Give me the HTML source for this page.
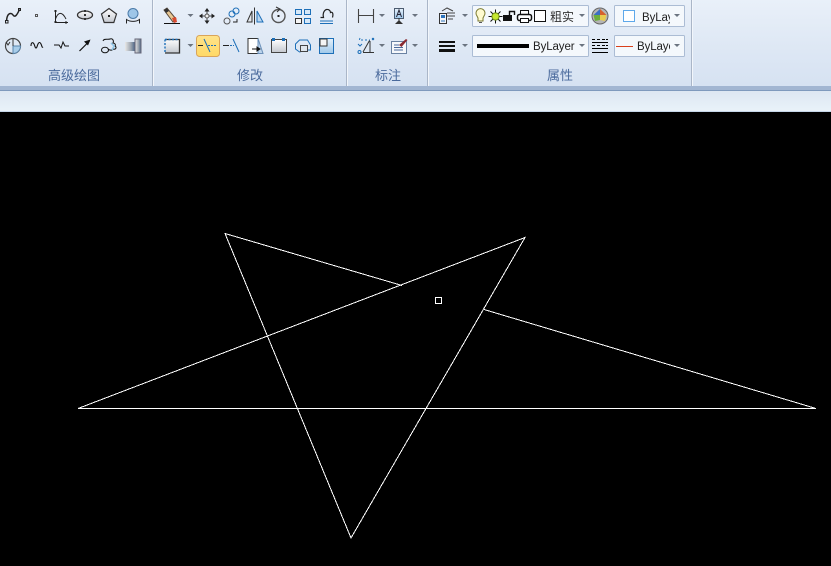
<!DOCTYPE html>
<html lang="zh"><head><meta charset="utf-8"><title>CAD</title>
<style>
html,body{margin:0;padding:0;background:#000}
body{width:831px;height:566px;overflow:hidden;position:relative}
svg{position:absolute;left:0;top:0;display:block}
text{font-family:"Liberation Sans","Noto Sans CJK SC",sans-serif}
</style></head><body>
<svg width="831" height="566" viewBox="0 0 831 566" xmlns="http://www.w3.org/2000/svg">
<defs>
<linearGradient id="rb" x1="0" y1="0" x2="0" y2="1"><stop offset="0" stop-color="#e9f0f9"/><stop offset=".6" stop-color="#dde7f4"/><stop offset="1" stop-color="#d6e2f2"/></linearGradient>
<linearGradient id="bar" x1="0" y1="0" x2="0" y2="1"><stop offset="0" stop-color="#dde7f2"/><stop offset="1" stop-color="#e9f2f9"/></linearGradient>
<linearGradient id="gray" x1="0" y1="0" x2="0" y2="1"><stop offset="0" stop-color="#fff"/><stop offset="1" stop-color="#c4c8cf"/></linearGradient>
<linearGradient id="blue" x1="0" y1="0" x2="0" y2="1"><stop offset="0" stop-color="#e6f1fb"/><stop offset="1" stop-color="#9fc8ea"/></linearGradient>
<linearGradient id="yl" x1="0" y1="0" x2="0" y2="1"><stop offset="0" stop-color="#ffe38a"/><stop offset="1" stop-color="#ffd966"/></linearGradient>
<linearGradient id="cyl" x1="0" y1="0" x2="1" y2="0"><stop offset="0" stop-color="#e8e8e8"/><stop offset=".6" stop-color="#9aa3ad"/><stop offset="1" stop-color="#4a6488"/></linearGradient>
<path id="a" d="M0 0h6l-3 3z" fill="#6b7480"/>
</defs>

<!-- ribbon -->
<rect x="0" y="0" width="831" height="86" fill="url(#rb)"/>
<rect x="0" y="86" width="831" height="4" fill="#a2b6d2"/>
<rect x="0" y="90" width="831" height="1" fill="#7f9abd"/>
<rect x="0" y="91" width="831" height="20" fill="url(#bar)"/>
<rect x="0" y="111" width="831" height="1" fill="#c6d6e8"/>
<rect x="0" y="112" width="831" height="454" fill="#000"/>
<g fill="#aab6c8">
<rect x="152" y="0" width="1" height="86"/><rect x="346" y="0" width="1" height="86"/><rect x="427" y="0" width="1" height="86"/><rect x="691" y="0" width="1" height="86"/>
</g>
<rect x="153" y="0" width="1" height="86" fill="#f2f6fb"/><rect x="347" y="0" width="1" height="86" fill="#f2f6fb"/><rect x="428" y="0" width="1" height="86" fill="#f2f6fb"/><rect x="692" y="0" width="1" height="86" fill="#f2f6fb"/>

<!-- group labels -->
<g font-size="13" fill="#4a6a9c" text-anchor="middle">
<text x="74" y="80">高级绘图</text><text x="250" y="80">修改</text><text x="388" y="80">标注</text><text x="560" y="80">属性</text>
</g>

<!-- row 1 left -->
<g fill="none" stroke="#222" stroke-width="1">
<path d="M6.500 21C7 13 11 12 13 15S17 15 19.500 9.500" stroke-width="1.500" stroke="#222"/><rect x="5.500" y="20.500" width="2.500" height="2.500" stroke-width="1"/><rect x="18.500" y="8.500" width="2" height="2"/>
<rect x="35.500" y="14.500" width="2" height="2" stroke="#555"/>
<path d="M55.500 10V22.500H68M55.500 19C58 12 62 11 66 19" stroke="#222"/><path d="M54 11h3M54 22h3M66 21v3" stroke="#222"/>
<ellipse cx="85" cy="15" rx="7.500" ry="4" stroke="#333" stroke-width="1.300" fill="url(#gray)"/><rect x="84" y="10" width="2" height="2" fill="#333" stroke="none"/><rect x="84" y="18" width="2" height="2" fill="#333" stroke="none"/><rect x="84" y="14" width="2" height="2" fill="#333" stroke="none"/>
<path d="M109 8.500L116.500 14 113.800 22.500H104.200L101.500 14Z" stroke="#333" stroke-width="1.200" fill="url(#gray)"/><rect x="108" y="15" width="2" height="2" fill="#222" stroke="none"/>
<circle cx="133" cy="13.500" r="5" fill="#9ec6e8" stroke="#4a7aa8"/><path d="M126.500 23.500V19.500C130 22 136 22 139.500 19.500V23.500" stroke="#222"/>
</g>
<!-- row 2 left -->
<g fill="none" stroke="#333" stroke-width="1">
<circle cx="13" cy="46" r="7.500" stroke="#444" stroke-width="1.200"/><path d="M13 46h7.500a7.500 7.500 0 0 1-7.500 7.500Z" fill="#a8cdea" stroke="#5a86ad"/><path d="M6 42l2 3 2-3M13 38.500v7.500" stroke="#333"/>
<path d="M31 46c0-4 2-4 3-2s1 4 2 4 1-2 2-4 2-2 3 0 1 4 2 3" stroke="#111" stroke-width="1.100"/>
<path d="M54 45h5l2 3 2-6 2 4h4" stroke="#111"/>
<path d="M79.500 51L89.500 41" stroke="#111" stroke-width="1.200"/><path d="M84 41.500l4 4 2.500-6z" fill="#111" stroke="none"/>
<path d="M103 41c1-3 5-1 7-2 3-1 4 2 3 4 2 0 3 2 2 3 2 1 1 4-2 3-1 2-4 1-5 0" stroke="#111"/><ellipse cx="105" cy="50" rx="3.500" ry="2.800" stroke="#111"/><path d="M111 43l3 3-2 4" stroke="#8ec6e8" stroke-width="1.500"/>
<rect x="125" y="42" width="10" height="9" fill="url(#cyl)" stroke="none"/><rect x="135" y="39" width="6" height="14" fill="url(#cyl)" stroke="#667"/>
</g>

<!-- modify row 1 -->
<g fill="none" stroke="#222">
<path d="M164 10l3-2 9 11-3 3z" fill="#e8c894" stroke="#5a4a3a"/><path d="M172 18l4-1 1 5-3 1z" fill="#d94a30" stroke="none"/><path d="M164 10l3-2 2 3-3 2z" fill="#333" stroke="none"/><path d="M164 23.500h16" stroke="#111"/>
<path d="M207 11v10M202 16h10" stroke="#444"/><path d="M207 8l-2.500 3.500h5zM207 24l-2.500-3.500h5zM199 16l3.500-2.500v5zM215 16l-3.500-2.500v5z" fill="#222" stroke="none"/><circle cx="207" cy="16" r="2" fill="#eee" stroke="#555"/>
<circle cx="227" cy="21" r="3" stroke="#555"/><circle cx="232" cy="14" r="3" stroke="#1d6fb8"/><circle cx="236" cy="11" r="3" stroke="#1d6fb8"/><path d="M233 22h4v-3" stroke="#222"/>
<path d="M254.500 7.500v17" stroke="#333"/><path d="M252 11v11h-5z" fill="#e5e9ee" stroke="#333"/><path d="M257 11v11h6z" fill="#bcd7f0" stroke="#1d6fb8"/>
<circle cx="278.500" cy="16" r="6.500" stroke="#555" stroke-width="1.400"/><rect x="277.500" y="15" width="2" height="2" fill="#222" stroke="none"/><path d="M276 7l4 2-3 3" stroke="#333"/>
<rect x="295.500" y="9.500" width="6" height="5" stroke="#1d6fb8" fill="#d6e8f8"/><rect x="304.500" y="9.500" width="6" height="5" stroke="#1d6fb8" fill="#d6e8f8"/><rect x="295.500" y="18.500" width="6" height="5" stroke="#333" fill="#f5f5f5"/><rect x="304.500" y="18.500" width="6" height="5" stroke="#1d6fb8" fill="#d6e8f8"/>
<path d="M320.500 17.500h3c-1-3 0-7 3-8 3-.5 4 2 4 3 2-1 3 1 2 5" stroke="#222" stroke-width="1.200"/><path d="M320 21h13M320 23.500h13" stroke="#1d6fb8"/>
</g>
<use href="#a" x="187.500" y="14"/>

<!-- modify row 2 -->
<rect x="196.500" y="35.500" width="23" height="21" rx="3" fill="url(#yl)" stroke="#d9a45a"/>
<g fill="none" stroke="#222">
<rect x="165" y="39" width="14" height="14" fill="url(#gray)" stroke="none"/><path d="M165 39.500h14.500V53H165" stroke="#333" stroke-width="1.300"/><path d="M165 39.500h14M165 39.500v14" stroke="#1d6fb8" stroke-dasharray="2 1.500" stroke-width="1.400"/>
<path d="M198 45.500h5" stroke="#222"/><path d="M204 39l6 13" stroke="#1d6fb8"/><path d="M208 45.500h9" stroke="#1d6fb8" stroke-dasharray="2 1"/>
<path d="M223 45.500h6" stroke="#222"/><path d="M230 45.500h4" stroke="#1d6fb8" stroke-dasharray="2 1"/><path d="M233 39l6 13" stroke="#1d6fb8"/>
<path d="M248 38.500h10v15h-10z" fill="#fff" stroke="#333"/><path d="M258 38.500l5 15h-5z" fill="#bcd4ec" stroke="#6a8fb8"/><path d="M252 49h7" stroke="#111"/><path d="M260 49l-3-2v4z" fill="#111" stroke="#111"/>
<rect x="271.500" y="39.500" width="15" height="13" fill="url(#gray)" stroke="#444"/><rect x="272" y="38" width="3" height="3" fill="#1d6fb8" stroke="none"/><rect x="282" y="38" width="3" height="3" fill="#1d6fb8" stroke="none"/>
<path d="M295.500 44l4-4h8l3 5v5h-3l-8 2-4-3z" stroke="#1d6fb8"/><rect x="300.500" y="45.500" width="7" height="6" stroke="#444" fill="#dfe5ec"/>
<rect x="319.500" y="38.500" width="14" height="15" fill="url(#blue)" stroke="#1d6fb8"/><rect x="320" y="39" width="7" height="7" fill="#f5f5f5" stroke="#333"/>
</g>
<use href="#a" x="187.500" y="44"/>

<!-- dim -->
<g fill="none" stroke="#444">
<path d="M358.500 9v14M373.500 9v14M359 15.500h14" stroke-width="1.100"/>
<rect x="394.500" y="8.500" width="9" height="10" fill="url(#blue)" stroke="#4c5c70"/><path d="M396.500 17l2.500-7 2.500 7M397.500 14.500h3" stroke="#223"/><path d="M399 18v4" stroke="#333"/><path d="M395 24l4-4 4 4z" fill="#333" stroke="none"/>
<path d="M360 38l-1 3m14-3v3M361 40h9" stroke="#1d6fb8" stroke-dasharray="2 2"/><path d="M369.500 40.500L363 52M363 52.500h11M370 41v12" stroke="#333"/><circle cx="359.500" cy="52" r="1.500" stroke="#1d6fb8"/><path d="M358 44l2 2 2-2" stroke="#1d6fb8"/><path d="M372 38l2 2m0-2l-2 2" stroke="#1d6fb8"/>
<rect x="391.500" y="41.500" width="15" height="12" fill="#f6f8fb" stroke="#6a82a2"/><path d="M394 45h5M394 47.500h9M394 50h9" stroke="#4a6a9c"/><path d="M399 45l7-6 1.500 1-6 7z" fill="#8a2a30" stroke="none"/>
</g>
<use href="#a" x="379" y="14"/><use href="#a" x="412" y="14"/><use href="#a" x="379" y="44"/><use href="#a" x="412" y="44"/>

<!-- properties left icons -->
<g fill="none" stroke="#333">
<path d="M442 11l5-3 6 3M447 13h8M447 16h8M448 19h5" stroke="#444"/>
<rect x="439.500" y="13.500" width="7" height="10" fill="#f4f6f9" stroke="#333"/><rect x="441" y="15" width="4" height="3" fill="#2d74bc" stroke="none"/><path d="M441 21h4" stroke="#2d74bc"/>
</g>
<g fill="#111"><rect x="439" y="41" width="16" height="2"/><rect x="439" y="45" width="16" height="2"/><rect x="439" y="49" width="16" height="3"/></g>
<use href="#a" x="462" y="14"/><use href="#a" x="462" y="44"/>

<!-- layer combo -->
<rect x="472.500" y="5.500" width="116" height="21" rx="1" fill="#f4f8fc" stroke="#abbcd4"/>
<path d="M477 16a4.500 4.500 0 1 1 7 0l-1 2v3h-5v-3z" fill="#fffbd0" stroke="#7a7a30"/><path d="M479 22.500h3" stroke="#555"/>
<g stroke="#111" stroke-width="1"><path d="M495.500 9.500v14M488.500 16.500h14M490.500 11.500l10 10M500.500 11.500l-10 10"/></g><circle cx="495.500" cy="16.500" r="3.600" fill="#c6e830" stroke="#6c8a10"/>
<rect x="503" y="15" width="9" height="6" fill="#111"/><path d="M509.500 15v-3.500h5V15" fill="none" stroke="#111" stroke-width="1.400"/>
<g fill="none" stroke="#111"><rect x="520.500" y="10.500" width="8" height="4" fill="#fff"/><rect x="517.500" y="14.500" width="14" height="6" rx="2" fill="#fff" stroke-width="1.500"/><rect x="520.500" y="18.500" width="8" height="4" fill="#fff"/></g>
<rect x="534.500" y="10.500" width="11" height="11" fill="#fff" stroke="#111"/>
<text x="550" y="21" font-size="12" fill="#333">粗实</text>
<use href="#a" x="579" y="14"/>

<!-- linewidth combo -->
<rect x="472.500" y="35.500" width="116" height="21" rx="1" fill="#f4f8fc" stroke="#abbcd4"/>
<rect x="477" y="44" width="52" height="4" fill="#000"/>
<text x="533" y="50" font-size="11.500" letter-spacing="-.1" fill="#222">ByLayer</text>
<use href="#a" x="579" y="44"/>

<!-- color wheel -->
<circle cx="600" cy="16" r="8" fill="#b5b5b5" stroke="#666"/>
<path d="M600 9l-6.500 6h6.500z" fill="#3b6fc4"/><path d="M600 9l6.500 6H600z" fill="#d8612c"/><path d="M593.500 15l1.500 6 5-1v-5z" fill="#6caf3c"/><path d="M606.500 15L605 21l-5-1v-5z" fill="#e8cc50"/>

<!-- linetype icon -->
<g fill="#000">
<path d="M592 39h3v1h-3zM597 39h3v1h-3zM602 39h3v1h-3zM606 39h2v1h-2z"/>
<path d="M592 42h16v1h-16zM592 48h16v1h-16zM592 52h16v1h-16z"/>
<path d="M592 45h3v1h-3zM597 45h3v1h-3zM602 45h3v1h-3zM606 45h2v1h-2z"/>
</g>

<!-- color combo -->
<rect x="614.500" y="5.500" width="70" height="21" rx="1" fill="#f4f8fc" stroke="#abbcd4"/>
<rect x="623.500" y="10.500" width="11" height="11" fill="#fff" stroke="#5ea8ea"/>
<svg x="642" y="6" width="28" height="20"><text x="0" y="15" font-size="11.500" letter-spacing="-.1" fill="#222">ByLayer</text></svg>
<use href="#a" x="674" y="14"/>

<!-- line combo -->
<rect x="614.500" y="35.500" width="70" height="21" rx="1" fill="#f4f8fc" stroke="#abbcd4"/>
<rect x="616" y="46" width="17" height="1" fill="#d9401c"/>
<svg x="637" y="36" width="33" height="20"><text x="0" y="14" font-size="11.500" letter-spacing="-.1" fill="#222">ByLayer</text></svg>
<use href="#a" x="674" y="44"/>

<!-- drawing -->
<g fill="none" stroke="#fff" stroke-width="1" shape-rendering="crispEdges">
<path d="M402 285.500L225 233.500 351 538 525 237.500 78 408.500H816L484 309.500"/>
<rect x="435.500" y="297.500" width="6" height="6" stroke-width="1"/>
</g>
</svg>
</body></html>
